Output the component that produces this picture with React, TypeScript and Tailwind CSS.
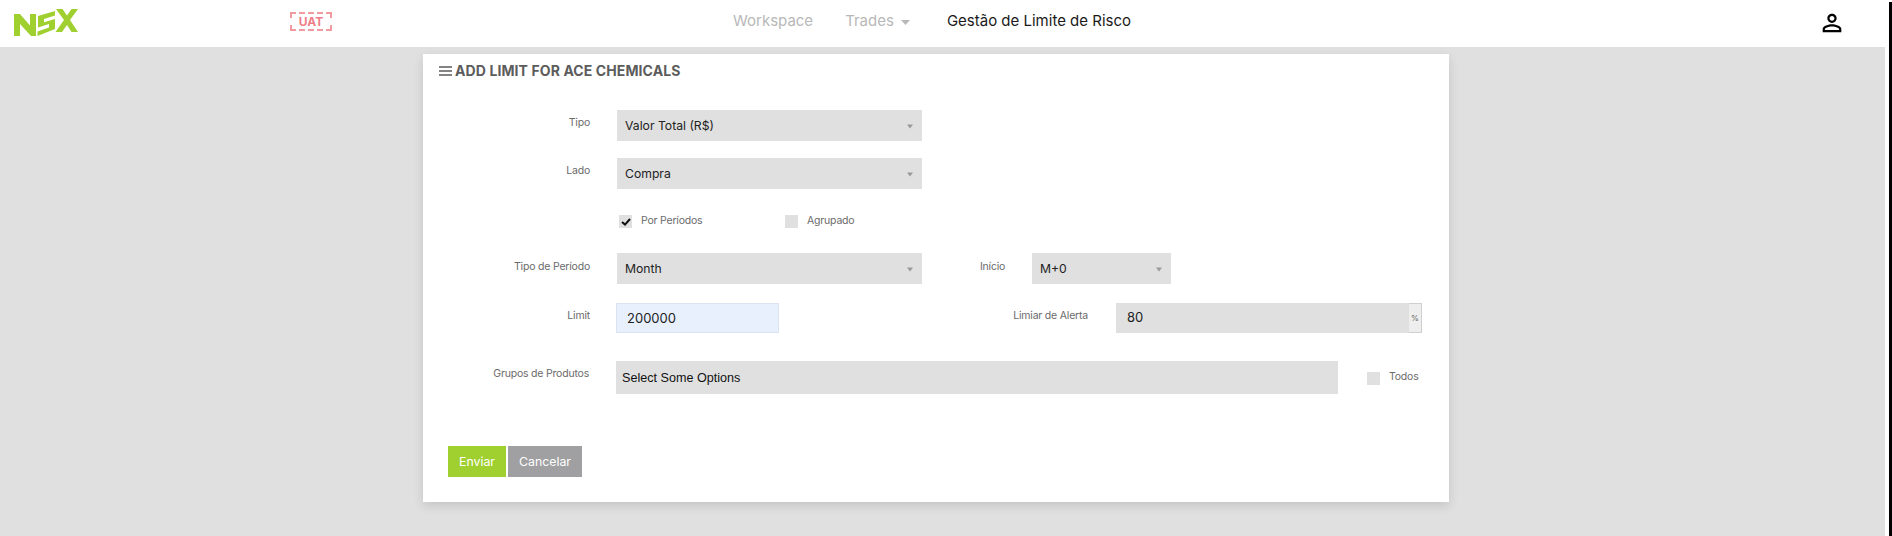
import { ReactNode } from 'react';

const font = 'font-["Inter","Liberation_Sans",sans-serif]';

function Logo() {
  return (
    <svg width="66" height="30" viewBox="12 8 66 30" className="shrink-0">
      <g fill="#a0d030">
        <path d="M13 14h6l10 11.500V14h6v22h-5L19 24v12h-6z" />
        <path d="M37 16 54 11v4.500l-11 3.500v3.200L54 19v10l-17.500 7v-4.500l11.500-4V24l-11 3.500z" />
        <path d="M55 9h6.500l4.500 6.500L70.500 9H77l-8 11 8 12h-6.500L66 25l-5 7h-6.500L63 20z" />
      </g>
    </svg>
  );
}

function Caret() {
  return (
    <svg width="6" height="5" viewBox="0 0 6 5" className="shrink-0">
      <path d="M0 0.500h6L3 4.500z" fill="#999" />
    </svg>
  );
}

function Select({ value, className }: { value: string; className: string }) {
  return (
    <div className={`flex h-[31px] items-center justify-between bg-[#e0e0e0] pl-2 pr-[9px] pt-[1px] text-[12.2px] text-[#222] ${className}`}>
      <span>{value}</span>
      <Caret />
    </div>
  );
}

function Label({ children, className }: { children: ReactNode; className: string }) {
  return <label className={`shrink-0 text-right text-[10.500px] leading-4 tracking-[-0.2px] text-[#6b6b6b] ${className}`}>{children}</label>;
}

function Check({ label, checked, className }: { label: string; checked?: boolean; className?: string }) {
  return (
    <div className={`flex items-center gap-[9px] ${className ?? ''}`}>
      <div className="flex h-[13px] w-[13px] items-center justify-center bg-[#e0e0e0]">
        {checked && (
          <svg width="10" height="8" viewBox="0 0 10 8">
            <path d="M1 4l3 2.600L9 1" fill="none" stroke="#111" strokeWidth="2" />
          </svg>
        )}
      </div>
      <span className="-mt-[2px] text-[10.500px] leading-4 tracking-[-0.2px] text-[#6b6b6b]">{label}</span>
    </div>
  );
}

export default function App() {
  return (
    <div className={`flex h-[536px] w-full overflow-hidden bg-white ${font}`}>
      <div className="flex min-w-0 flex-1 flex-col">
        <header className="flex h-[47px] shrink-0 items-start bg-white pr-[43px]">
          <div className="ml-[13px] mt-[8px]">
            <Logo />
          </div>
          <div className="ml-[211px] mt-[12px] flex h-[19px] w-[42px] items-center justify-center border-2 border-dashed border-[#f19aa0] text-[12px] font-bold text-[#ee7f87]">
            UAT
          </div>
          <nav className="ml-[401px] mt-[11px] flex items-center text-[15px] leading-5">
            <span className="text-[#b8b8b8]">Workspace</span>
            <span className="ml-[32px] text-[#b8b8b8]">Trades</span>
            <svg width="9" height="5" viewBox="0 0 9 5" className="ml-[7px] mt-[2px]">
              <path d="M0 0h9L4.500 5z" fill="#b8b8b8" />
            </svg>
            <span className="ml-[37px] text-[#1a1a1a]">Gestão de Limite de Risco</span>
          </nav>
          <svg width="28" height="28" viewBox="0 0 24 24" fill="#000" className="ml-auto mr-[-4px] mt-[9px]">
            <path d="M12 5.900c1.160 0 2.100.940 2.100 2.100s-.940 2.100-2.100 2.100S9.900 9.160 9.900 8s.940-2.100 2.100-2.100m0 9c2.970 0 6.100 1.460 6.100 2.100v1.100H5.900V17c0-.640 3.130-2.100 6.100-2.100M12 4C9.790 4 8 5.790 8 8s1.790 4 4 4 4-1.790 4-4-1.790-4-4-4zm0 9c-2.670 0-8 1.340-8 4v3h16v-3c0-2.660-5.330-4-8-4z" />
          </svg>
        </header>

        <main className="flex-1 bg-[#e0e0e0] pl-[423px] pt-[7px]">
          <section className="h-[448px] w-[1026px] bg-white shadow-[0_4px_10px_rgba(0,0,0,0.12)]">
            <h2 className="flex h-[32px] items-center gap-[3px] pl-[16px] pt-[1px] text-[14px] font-bold uppercase tracking-[0.1px] text-[#5c5c5c]">
              <svg width="13" height="10" viewBox="0 0 13 10">
                <path d="M0 1h13M0 5h13M0 9h13" stroke="#5c5c5c" strokeWidth="1.500" />
              </svg>
              Add limit for Ace Chemicals
            </h2>

            <div className="mt-[24px] flex items-start">
              <Label className="mt-[5px] w-[167px]">Tipo</Label>
              <Select value="Valor Total (R$)" className="ml-[27px] w-[305px]" />
            </div>

            <div className="mt-[17px] flex items-start">
              <Label className="mt-[5px] w-[167px]">Lado</Label>
              <Select value="Compra" className="ml-[27px] w-[305px]" />
            </div>

            <div className="mt-[26px] flex h-[13px] items-center pl-[196px]">
              <Check label="Por Períodos" checked className="w-[166px]" />
              <Check label="Agrupado" />
            </div>

            <div className="mt-[25px] flex items-start">
              <Label className="mt-[6px] w-[167px]">Tipo de Período</Label>
              <Select value="Month" className="ml-[27px] w-[305px]" />
              <Label className="ml-[58px] mt-[6px] w-[25px]">Início</Label>
              <Select value="M+0" className="ml-[27px] w-[139px]" />
            </div>

            <div className="mt-[19px] flex items-start">
              <Label className="mt-[5px] w-[167px]">Limit</Label>
              <input
                readOnly
                value="200000"
                className="ml-[26px] h-[30px] w-[163px] border border-[#dbe3f0] bg-[#e8f0fe] pl-[10px] text-[13px] text-[#222] outline-none"
              />
              <Label className="ml-[199px] mt-[5px] w-[110px]">Limiar de Alerta</Label>
              <div className="ml-[28px] flex h-[30px] w-[306px]">
                <div className="flex flex-1 items-center bg-[#e0e0e0] pl-[11px] text-[13px] text-[#222]">80</div>
                <div className="flex w-[13px] items-center justify-center border-y border-r border-[#cfcfcf] bg-[#eeeeee] text-[8px] text-[#666]">
                  %
                </div>
              </div>
            </div>

            <div className="mt-[28px] flex items-start">
              <Label className="mt-[5px] w-[166px]">Grupos de Produtos</Label>
              <div className="ml-[27px] flex h-[33px] w-[722px] items-center bg-[#e0e0e0] pl-[6px] pt-[1px] font-['Liberation_Sans',sans-serif] text-[12.600px] text-[#111]">
                Select Some Options
              </div>
              <Check label="Todos" className="ml-[29px] mt-[10px]" />
            </div>

            <div className="ml-[25px] mt-[52px] flex gap-[2px] text-[12.300px] text-white">
              <button className="h-[31px] w-[58px] bg-[#a0d030] pt-[2px]">Enviar</button>
              <button className="h-[31px] w-[74px] bg-[#a0a0a2] pt-[2px]">Cancelar</button>
            </div>
          </section>
        </main>
      </div>
      <div className="flex w-[7px] shrink-0">
        <div className="w-[4px] bg-white" />
        <div className="mt-[2px] w-[3px] bg-black" />
      </div>
    </div>
  );
}
